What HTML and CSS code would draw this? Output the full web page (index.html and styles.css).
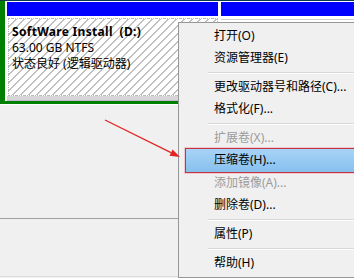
FILE: index.html
```html
<!DOCTYPE html>
<html>
    <head>
        <meta charset="UTF-8"/>
        <title>磁盘管理</title>
        <link rel="stylesheet" href="styles.css">
    </head>
    <body>
        <div class="screen">
            <div class="disk">
                <div class="ext">
                    <div class="cap"></div>
                    <div class="box">
                        <div class="vname">SoftWare Install&nbsp;&nbsp;(D:)</div>
                        <div>63.00 GB NTFS</div>
                        <div>状态良好 (逻辑驱动器)</div>
                    </div>
                    <div class="shelf"></div>
                </div>
                <div class="free">
                    <div class="cap"></div>
                    <div class="free-edge"></div>
                </div>
            </div>
            <div class="lower">
                <div class="pane"></div>
                <div class="pane pane-last"></div>
            </div>

            <ul class="menu">
                <li>打开(O)</li>
                <li>资源管理器(E)</li>
                <li class="sep"></li>
                <li>更改驱动器号和路径(C)...</li>
                <li>格式化(F)...</li>
                <li class="sep"></li>
                <li class="off">扩展卷(X)...</li>
                <li class="hot">压缩卷(H)...</li>
                <li class="off">添加镜像(A)...</li>
                <li>删除卷(D)...</li>
                <li class="sep"></li>
                <li>属性(P)</li>
                <li class="sep"></li>
                <li>帮助(H)</li>
            </ul>

            <!-- 标注箭头 -->
            <svg class="arrow" width="354" height="278" viewBox="0 0 354 278">
                <line x1="105" y1="120" x2="171" y2="152.6" stroke="#e02424" stroke-width="1.3"/>
                <polygon points="180,157 169.5,155.7 172.6,149.4" fill="#e02424"/>
            </svg>
        </div>
    </body>
</html>
```

FILE: styles.css
```css
body{
    margin: 0;
}

.screen{
    position: relative;
    width: 354px;
    height: 278px;
    overflow: hidden;
    background: #f0f0f0;
    font-family: "Noto Sans", "Noto Sans CJK SC", sans-serif;
    font-size: 12px;
    color: #000;
}

/* 磁盘图 */
.disk{
    display: flex;
    height: 103px;
    border-top: 1px solid #0b3b4b;
    background: #fff;
}

.ext{
    box-sizing: border-box;
    width: 218px;
    border-left: 5px solid #008000;
    border-bottom: 3px solid #008000;
    padding: 1px 0 0 2px;
    display: flex;
    flex-direction: column;
}

.cap{
    height: 14px;
    background: #0000ff;
}

.box{
    box-sizing: border-box;
    height: 78px;
    margin: 2px 0 0 1px;
    padding: 5px 0 0 3px;
    border: 1px dotted #b4b4b4;
    line-height: 16px;
    white-space: nowrap;
    background-color: #fff;
    background-image: repeating-linear-gradient(135deg, #fff 0, #fff 4.8px, #c0c0c0 4.8px, #c0c0c0 5.66px);
}

.vname{
    font-weight: bold;
    letter-spacing: 0.3px;
}

.shelf{
    flex: 1;
    background: #d6d6d6;
    border-bottom: 1px solid #c8b8d8;
}

.free{
    flex: 1;
    border-left: 3px solid #fff;
    padding-top: 1px;
}

.free-edge{
    height: 2px;
    margin-top: 3px;
    border-top: 1px solid #d0d0d0;
    border-bottom: 2px solid #94aa94;
}

/* 下方空白区域 */
.lower{
    display: flex;
    flex-direction: column;
    height: 175px;
    border-top: 1px solid #fff;
}

.pane{
    height: 113px;
    border-bottom: 1px solid #a0a0a0;
}

.pane-last{
    height: 57px;
    border-bottom: 1px solid #dcdcdc;
}

/* 右键菜单 */
.menu{
    position: absolute;
    left: 178px;
    top: 22px;
    box-sizing: border-box;
    width: 180px;
    margin: 0;
    padding: 2px 2px 3px;
    list-style: none;
    background: #f0f0f0;
    border: 1px solid #979797;
    white-space: nowrap;
}

.menu li{
    height: 22px;
    line-height: 22px;
    padding-left: 33px;
}

.menu li.off{
    color: #9c9c9c;
}

.menu li.sep{
    height: 7px;
    padding: 0;
    margin-left: 27px;
    display: flex;
    align-items: center;
}

.menu li.sep::before{
    content: "";
    flex: 1;
    height: 1px;
    background: #d8d8d8;
    border-bottom: 1px solid #fff;
}

.menu li.hot{
    box-sizing: border-box;
    height: 23px;
    margin: 0 1px 0 5px;
    padding-left: 28px;
    background: linear-gradient(#a9d3f7, #86c0ee);
    box-shadow: 0 0 0 1px #c23440, 0 0 0 2px #f3c8cc;
}

.arrow{
    position: absolute;
    left: 0;
    top: 0;
    pointer-events: none;
}
```
